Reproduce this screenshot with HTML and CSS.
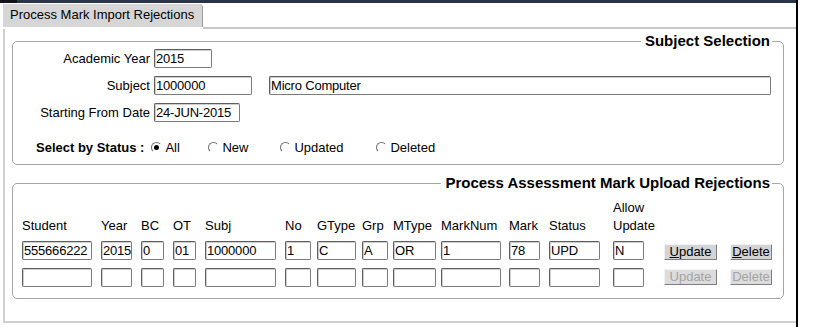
FILE: index.html
```html
<!DOCTYPE html>
<html lang="en">
<head>
  <meta charset="UTF-8">
  <title>Process Mark Import Rejections</title>
  <link rel="stylesheet" href="styles.css">
</head>
<body>
  <div class="window">
    <div class="topbar"><span class="topbar-corner"></span></div>
    <div class="tabs">
      <div class="tab">Process Mark Import Rejections</div>
      <div class="tabs-fill"></div>
    </div>
    <div class="panel">
      <fieldset class="group">
        <legend>Subject Selection</legend>
        <div class="sel-grid">
          <label class="sel-label">Academic Year</label>
          <div class="sel-row"><input type="text" class="in-year" value="2015"></div>
          <label class="sel-label">Subject</label>
          <div class="sel-row">
            <input type="text" class="in-subj" value="1000000">
            <input type="text" class="in-subjname" value="Micro Computer">
          </div>
          <label class="sel-label">Starting From Date</label>
          <div class="sel-row"><input type="text" class="in-date" value="24-JUN-2015"></div>
        </div>
        <div class="status-row">
          <span class="status-label">Select by Status :</span>
          <span class="opt opt-all"><span class="radio checked"></span>All</span>
          <span class="opt opt-new"><span class="radio"></span>New</span>
          <span class="opt opt-upd"><span class="radio"></span>Updated</span>
          <span class="opt opt-del"><span class="radio"></span>Deleted</span>
        </div>
      </fieldset>

      <fieldset class="group group-rej">
        <legend>Process Assessment Mark Upload Rejections</legend>
        <div class="rej-grid">
          <span class="hd">Student</span>
          <span class="hd">Year</span>
          <span class="hd">BC</span>
          <span class="hd">OT</span>
          <span class="hd">Subj</span>
          <span class="hd">No</span>
          <span class="hd">GType</span>
          <span class="hd">Grp</span>
          <span class="hd">MType</span>
          <span class="hd">MarkNum</span>
          <span class="hd">Mark</span>
          <span class="hd">Status</span>
          <span class="hd">Allow<br>Update</span>
          <span></span>
          <span></span>

          <input type="text" class="w-student" value="555666222">
          <input type="text" class="w-year" value="2015">
          <input type="text" class="w-bc" value="0">
          <input type="text" class="w-ot" value="01">
          <input type="text" class="w-subj" value="1000000">
          <input type="text" class="w-no" value="1">
          <input type="text" class="w-gtype" value="C">
          <input type="text" class="w-grp" value="A">
          <input type="text" class="w-mtype" value="OR">
          <input type="text" class="w-marknum" value="1">
          <input type="text" class="w-mark" value="78">
          <input type="text" class="w-status" value="UPD">
          <input type="text" class="w-allow" value="N">
          <button type="button" class="btn btn-upd"><u>U</u>pdate</button>
          <button type="button" class="btn btn-del"><u>D</u>elete</button>

          <input type="text" class="w-student">
          <input type="text" class="w-year">
          <input type="text" class="w-bc">
          <input type="text" class="w-ot">
          <input type="text" class="w-subj">
          <input type="text" class="w-no">
          <input type="text" class="w-gtype">
          <input type="text" class="w-grp">
          <input type="text" class="w-mtype">
          <input type="text" class="w-marknum">
          <input type="text" class="w-mark">
          <input type="text" class="w-status">
          <input type="text" class="w-allow">
          <button type="button" class="btn btn-upd" disabled>Update</button>
          <button type="button" class="btn btn-del" disabled>Delete</button>
        </div>
      </fieldset>
    </div>
  </div>
</body>
</html>
```

FILE: styles.css
```css
body {
  margin: 0;
  padding: 0;
  font-family: 'Liberation Sans', Arial, sans-serif;
  font-size: 13px;
  color: #000000;
  background-color: #FFFFFF;
}
.window {
  width: 796px;
  height: 327px;
  border-right: 2px solid #000000;
  box-sizing: content-box;
  overflow: hidden;
}
.topbar {
  height: 3px;
  background-color: #2B3548;
  display: flex;
}
.topbar-corner {
  width: 17px;
  background-color: #111418;
}
.tabs {
  display: flex;
  align-items: flex-start;
  margin-top: 1px;
  height: 25px;
}
.tab {
  width: 200px;
  height: 23px;
  margin-left: 3px;
  padding: 3px 0 0 7px;
  box-sizing: border-box;
  background-color: #D6D6D6;
  border-right: 1px solid #9C9C9C;
  border-top-right-radius: 4px;
  line-height: 16px;
  white-space: nowrap;
}
.tabs-fill {
  flex: 1;
  height: 23px;
  border-bottom: 2px solid #C8C8C8;
}
.panel {
  margin-left: 3px;
  border-left: 2px solid #D0D0D0;
  border-bottom: 2px solid #D0D0D0;
  padding: 4px 12px 22px 7px;
  height: 294px;
  box-sizing: border-box;
}
.group {
  margin: 0;
  padding: 0 0 9px 0;
  border: 1px solid #A6A6A6;
  border-radius: 5px;
  min-width: 0;
}
.group legend {
  margin-left: auto;
  margin-right: 11px;
  padding: 0 2px 0 4px;
  font-size: 15px;
  font-weight: 700;
  line-height: 16px;
}
.sel-grid {
  display: grid;
  grid-template-columns: 137px 1fr;
  column-gap: 4px;
  row-gap: 8px;
}
.sel-label {
  text-align: right;
  line-height: 19px;
  white-space: nowrap;
}
.sel-row {
  display: flex;
  gap: 17px;
}
input {
  height: 19px;
  box-sizing: border-box;
  padding: 0 0 0 1px;
  font-family: 'Liberation Sans', Arial, sans-serif;
  font-size: 13px;
  letter-spacing: -0.2px;
  color: #000000;
  background-color: #FFFFFF;
  border: 1px solid #7C7C7C;
  border-top-color: #5E5E5E;
  border-left-color: #5E5E5E;
  border-radius: 2px;
  box-shadow: inset 1px 1px 0 #CFCFCF;
  outline: none;
}
.in-year { width: 58px; }
.in-subj { width: 98px; }
.in-subjname { width: 502px; }
.in-date { width: 86px; }
.status-row {
  display: flex;
  align-items: center;
  margin: 17px 0 0 23px;
  height: 16px;
}
.status-label {
  font-weight: 700;
  margin-right: 7px;
}
.opt {
  display: flex;
  align-items: center;
}
.opt-all { width: 57px; }
.opt-new { width: 72px; }
.opt-upd { width: 96px; }
.radio {
  position: relative;
  width: 11px;
  height: 11px;
  margin-right: 3px;
  border: 1px solid transparent;
  border-top-color: #707070;
  border-left-color: #707070;
  border-radius: 50%;
  box-sizing: border-box;
}
.radio.checked::after {
  content: "";
  position: absolute;
  left: 2px;
  top: 2px;
  width: 5px;
  height: 5px;
  border-radius: 50%;
  background-color: #000000;
}
.group-rej {
  margin-top: 10px;
  padding: 8px 0 13px 9px;
}
.rej-grid {
  display: grid;
  grid-template-columns: 79px 40px 32px 32px 80px 32px 45px 31px 48px 68px 40px 64px 51px 66px 42px;
  grid-template-rows: 36px 19px 19px;
  row-gap: 6px;
}
.rej-grid input:nth-child(n+31) {
  margin-top: 2px;
}
.rej-grid .btn:nth-child(n+31) {
  margin-top: 2px;
}
.hd {
  align-self: end;
  line-height: 18px;
  white-space: nowrap;
}
.w-student { width: 70px; }
.w-year { width: 31px; }
.w-bc { width: 23px; }
.w-ot { width: 23px; }
.w-subj { width: 71px; }
.w-no { width: 26px; }
.w-gtype { width: 39px; }
.w-grp { width: 26px; }
.w-mtype { width: 43px; }
.w-marknum { width: 60px; }
.w-mark { width: 31px; }
.w-status { width: 51px; }
.w-allow { width: 31px; }
.btn {
  align-self: end;
  height: 16px;
  padding: 0;
  font-family: 'Liberation Sans', Arial, sans-serif;
  font-size: 13px;
  line-height: 14px;
  color: #000000;
  background-color: #D4D4D4;
  border: 1px solid;
  border-color: #F2F2F2 #7E7E7E #7E7E7E #F2F2F2;
  border-radius: 1px;
}
.btn:disabled {
  color: #A4A4A4;
  background-color: #DCDCDC;
}
.btn-upd { width: 53px; }
.btn-del { width: 42px; }
```
